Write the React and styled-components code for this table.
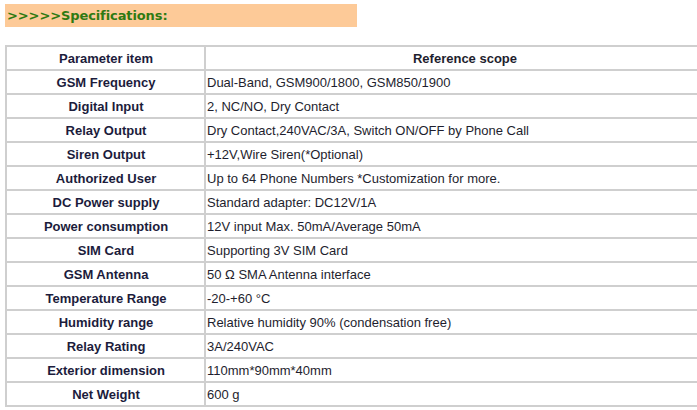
import styled, {createGlobalStyle} from 'styled-components'

const GlobalStyle = createGlobalStyle`
  body {
    margin: 0;
    background: #ffffff;
    font-family: "Liberation Sans", Arial, sans-serif;
  }
`

const Page = styled.div`
  padding: 4px 0 0 5px;
  width: 697px;
  height: 410px;
  box-sizing: border-box;
  overflow: hidden;
`

const TitleBar = styled.div`
  width: 352px;
  height: 23px;
  background: #fdca98;
  display: flex;
  align-items: center;
  padding-left: 2px;
  box-sizing: border-box;
`

const Title = styled.h2`
  margin: 0;
  font-family: "DejaVu Sans", sans-serif;
  font-size: 13px;
  font-weight: bold;
  color: #2f7a12;
  letter-spacing: -0.1px;
`

const Table = styled.table`
  margin-top: 18px;
  width: 720px;
  border-collapse: collapse;
  font-size: 13px;
`

const Row = styled.tr`
  height: 24px;
`

const Cell = styled.td`
  border: 2px solid #cfcfcf;
  padding: 0 0 0 1px;
  color: #1e1e2e;
  text-align: ${(p) => (p.$center ? 'center' : 'left')};
  font-weight: ${(p) => (p.$bold ? 'bold' : 'normal')};
  white-space: nowrap;
  ${(p) => p.$label && 'width: 196px; color: #1c1c3c;'}
`

const rows = [
  ['GSM Frequency', 'Dual-Band, GSM900/1800, GSM850/1900'],
  ['Digital Input', '2, NC/NO, Dry Contact'],
  ['Relay Output', 'Dry Contact,240VAC/3A, Switch ON/OFF by Phone Call'],
  ['Siren Output', '+12V,Wire Siren(*Optional)'],
  ['Authorized User', 'Up to 64 Phone Numbers *Customization for more.'],
  ['DC Power supply', 'Standard adapter: DC12V/1A'],
  ['Power consumption', '12V input Max. 50mA/Average 50mA'],
  ['SIM Card', 'Supporting 3V SIM Card'],
  ['GSM Antenna', '50 Ω SMA Antenna interface'],
  ['Temperature Range', '-20-+60 °C'],
  ['Humidity range', 'Relative humidity 90% (condensation free)'],
  ['Relay Rating', '3A/240VAC'],
  ['Exterior dimension', '110mm*90mm*40mm'],
  ['Net Weight', '600 g'],
]

export default function App() {
  return (
    <Page>
      <GlobalStyle />
      <TitleBar>
        <Title>&gt;&gt;&gt;&gt;&gt;Specifications:</Title>
      </TitleBar>
      <Table>
        <tbody>
          <Row>
            <Cell $label $center $bold>Parameter item</Cell>
            <Cell $center $bold>Reference scope</Cell>
          </Row>
          {rows.map(([name, value]) => (
            <Row key={name}>
              <Cell $label $center $bold>{name}</Cell>
              <Cell>{value}</Cell>
            </Row>
          ))}
        </tbody>
      </Table>
    </Page>
  )
}
